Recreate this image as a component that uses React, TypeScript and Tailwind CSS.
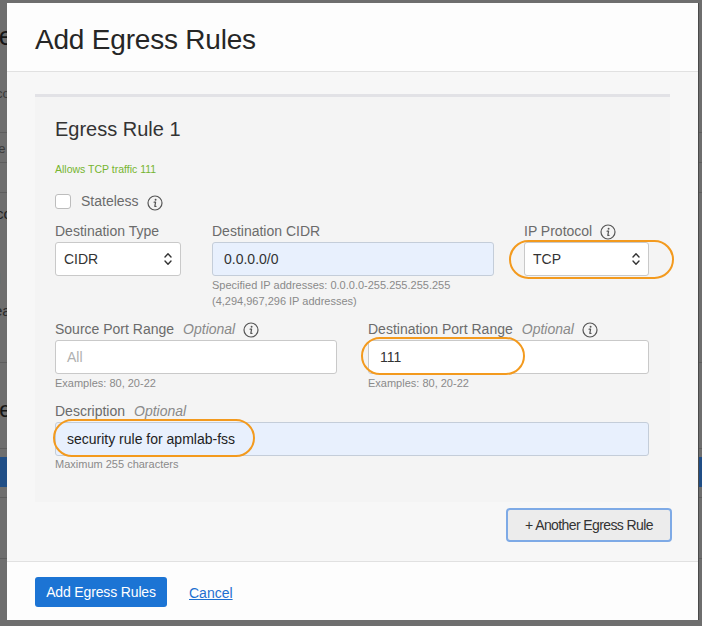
import React from "react";

const font = { fontFamily: '"Liberation Sans", Arial, Helvetica, sans-serif' };

function InfoIcon({ className = "" }: { className?: string }) {
  return (
    <svg width="16" height="16" viewBox="0 0 16 16" className={className} fill="none">
      <circle cx="8" cy="8" r="7" stroke="#555" strokeWidth="1.2" />
      <circle cx="8.6" cy="4.7" r="0.95" fill="#555" />
      <path d="M7.1 7.2 H8.6 L7.8 11.4 H9" stroke="#555" strokeWidth="1.2" strokeLinecap="round" strokeLinejoin="round" />
    </svg>
  );
}

function Chevrons() {
  return (
    <svg width="8" height="14" viewBox="0 0 8 14" fill="none">
      <path d="M1 5 L4 1.8 L7 5" stroke="#333" strokeWidth="1.4" strokeLinecap="round" strokeLinejoin="round" />
      <path d="M1 9 L4 12.2 L7 9" stroke="#333" strokeWidth="1.4" strokeLinecap="round" strokeLinejoin="round" />
    </svg>
  );
}

function Label({ text, optional, info }: { text: string; optional?: boolean; info?: boolean }) {
  return (
    <div className="flex items-center h-[17px] mb-[2px] text-[14px] text-[#6b6b6b] font-medium whitespace-nowrap">
      <span>{text}</span>
      {optional && <span className="ml-[9px] italic font-normal text-[#8a8a8a]">Optional</span>}
      {info && <InfoIcon className="ml-[8px]" />}
    </div>
  );
}

function Select({ value, width }: { value: string; width: string }) {
  return (
    <div
      className={`${width} h-[34px] flex items-center justify-between pl-[8px] pr-[8px] bg-white border border-[#c9c9c9] rounded-[3px] text-[14px] text-[#333]`}
    >
      <span>{value}</span>
      <Chevrons />
    </div>
  );
}

function Help({ children }: { children: React.ReactNode }) {
  return <div className="text-[11px] leading-[16px] text-[#8a8a8a] mt-[1px]">{children}</div>;
}

function Ring({ className }: { className: string }) {
  return <div className={`absolute border-2 border-[#f39a1e] rounded-full pointer-events-none ${className}`} />;
}

export default function App() {
  return (
    <div className="relative w-[702px] h-[626px] overflow-hidden bg-[#6e6e6e]" style={font}>
      {/* dimmed page behind the dialog */}
      <div className="w-[702px] flex flex-col text-[#1e1e1e]">
        <div className="h-[22px]" />
        <div className="h-[40px] text-[26px] leading-[28px] -ml-[10px] text-[#151515]">re</div>
        <div className="h-[70px] text-[13px] pt-[22px] -ml-[4px] text-[#3a3a3a]">co</div>
        <div className="h-[30px] border-t border-[#5d5d5d] text-[13px] pt-[6px] -ml-[6px] text-[#3a3a3a]">re</div>
        <div className="h-[30px] border-t border-[#5d5d5d]" />
        <div className="h-[170px] border-t border-[#5d5d5d] text-[15px] pt-[10px] -ml-[4px] text-[#1e1e1e]">
          <div>cc</div>
          <div className="mt-[42px] -ml-[3px]">Il</div>
          <div className="mt-[10px] -ml-[2px] text-[#2a2a2a]">ea</div>
        </div>
        <div className="h-[86px] border-t border-[#5d5d5d] text-[22px] pt-[30px] -ml-[8px] text-[#151515]">re</div>
        <div className="h-[9px] border-t border-[#5d5d5d]" />
        <div className="h-[30px] bg-[#204e86]" />
        <div className="h-[10px]" />
        <div className="h-[61px] border-t border-[#5d5d5d]" />
        <div className="h-[60px] border-t border-[#5d5d5d] relative">
          <div className="ml-[120px] mt-[58px] w-[30px] border-t-2 border-[#2c5a93]" />
        </div>
      </div>

      {/* dialog */}
      <div className="absolute left-[7px] top-[3px] w-[691px] flex flex-col shadow-[1px_0_0_#4a4a4a]">
        <div className="h-[69px] bg-[#fdfdfd] pl-[28px] pt-[21px] border-b border-[#e1e1e1]">
          <h1 className="text-[28px] leading-[32px] tracking-[-0.2px] text-[#262626]">Add Egress Rules</h1>
        </div>

        <div className="bg-[#f7f7f7] pl-[28px] pr-[28px] pt-[22px] pb-[19px] flex flex-col">
          <div className="relative h-[408px] bg-[#f4f4f4] border-t-[3px] border-[#e2e2e6] pl-[20px] pr-[21px] pt-[20px]">
            <h2 className="text-[20px] leading-[24px] text-[#333]">Egress Rule 1</h2>
            <div className="mt-[21px] text-[10.5px] leading-[14px] text-[#76b52f]">Allows TCP traffic 111</div>

            <div className="mt-[17px] flex items-center h-[16px]">
              <div className="w-[16px] h-[15px] bg-white border border-[#bdbdbd] rounded-[3px]" />
              <span className="ml-[10px] text-[14px] font-medium text-[#6b6b6b]">Stateless</span>
              <InfoIcon className="ml-[8px] mt-[4px]" />
            </div>

            <div className="mt-[14px] flex">
              <div className="w-[126px]">
                <Label text="Destination Type" />
                <Select value="CIDR" width="w-[126px]" />
              </div>
              <div className="w-[282px] ml-[31px]">
                <Label text="Destination CIDR" />
                <div className="h-[34px] flex items-center pl-[11px] bg-[#e8f0fd] border border-[#c4cdd9] rounded-[3px] text-[14px] text-[#333]">
                  0.0.0.0/0
                </div>
                <Help>
                  <div>Specified IP addresses: 0.0.0.0-255.255.255.255</div>
                  <div>(4,294,967,296 IP addresses)</div>
                </Help>
              </div>
              <div className="w-[125px] ml-[30px]">
                <Label text="IP Protocol" info />
                <Select value="TCP" width="w-[125px]" />
              </div>
            </div>

            <div className="mt-[12px] flex gap-[31px]">
              <div className="w-[282px]">
                <Label text="Source Port Range" optional info />
                <div className="h-[34px] flex items-center pl-[11px] bg-white border border-[#c9c9c9] rounded-[3px] text-[14px] text-[#b0b0b0]">
                  All
                </div>
                <Help>Examples: 80, 20-22</Help>
              </div>
              <div className="w-[281px]">
                <Label text="Destination Port Range" optional info />
                <div className="h-[34px] flex items-center pl-[11px] bg-white border border-[#c9c9c9] rounded-[3px] text-[14px] text-[#333]">
                  111
                </div>
                <Help>Examples: 80, 20-22</Help>
              </div>
            </div>

            <div className="mt-[12px]">
              <Label text="Description" optional />
              <div className="h-[34px] flex items-center pl-[11px] bg-[#e8f0fd] border border-[#c4cdd9] rounded-[3px] text-[14px] text-[#222]">
                security rule for apmlab-fss
              </div>
              <div className="text-[11px] leading-[16px] text-[#8a8a8a]">Maximum 255 characters</div>
            </div>

            <Ring className="left-[474px] top-[143px] w-[165px] h-[39px]" />
            <Ring className="left-[326px] top-[240px] w-[164px] h-[38px]" />
            <Ring className="left-[18px] top-[322px] w-[202px] h-[38px]" />
          </div>

          <div className="mt-[6px] flex justify-end -mr-[2px]">
            <button className="w-[166px] h-[34px] bg-[#ececec] border-2 border-[#7eaae6] rounded-[4px] text-[14px] tracking-[-0.6px] text-[#333]">
              + Another Egress Rule
            </button>
          </div>
        </div>

        <div className="h-[59px] bg-[#fdfdfd] border-t border-[#e1e1e1] pl-[28px] pt-[15px] flex items-start">
          <button className="w-[132px] h-[30px] bg-[#1c74d4] rounded-[3px] text-white text-[14px] tracking-[-0.15px]">
            Add Egress Rules
          </button>
          <a className="ml-[22px] mt-[6px] text-[14px] text-[#1d6fd0] underline">Cancel</a>
        </div>
      </div>
    </div>
  );
}
